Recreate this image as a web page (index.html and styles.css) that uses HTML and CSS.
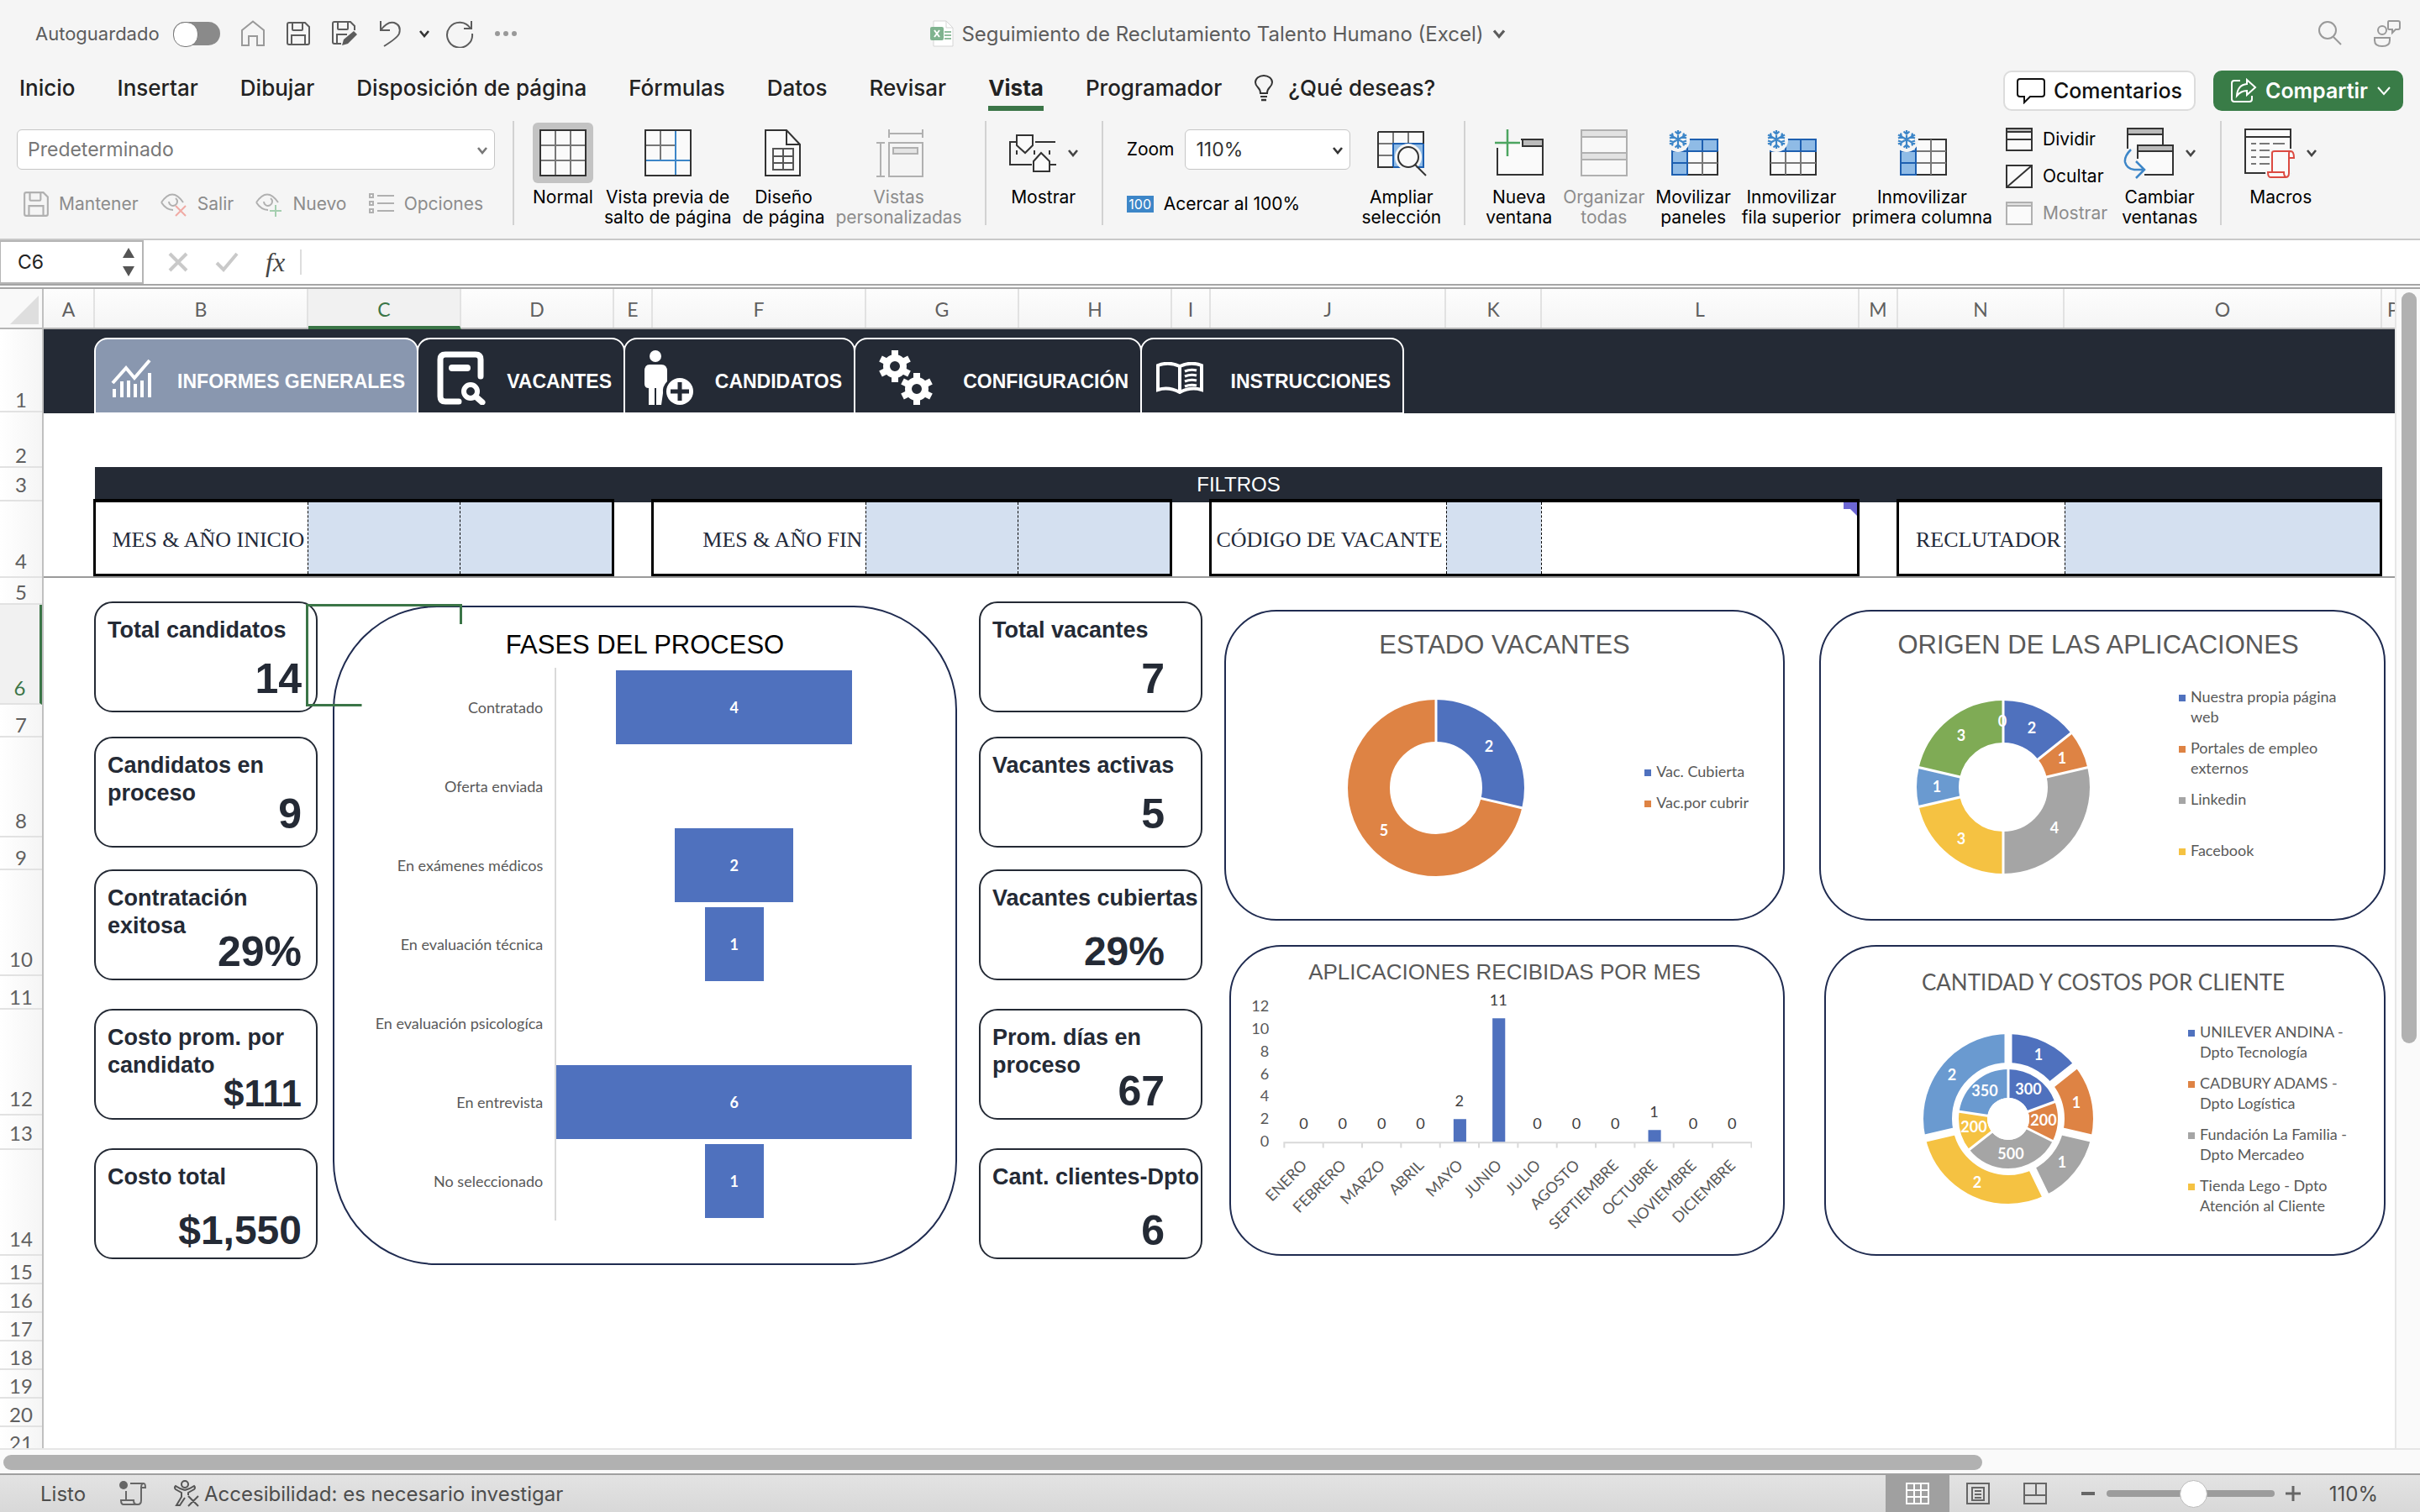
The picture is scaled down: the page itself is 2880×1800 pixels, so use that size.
FILE: index.html
```html
<!DOCTYPE html>
<html lang="es">

<head>
    <meta charset="UTF-8">
    <title>Seguimiento de Reclutamiento Talento Humano (Excel)</title>
    <link rel="stylesheet" href="styles.css">
</head>

<body>
    <svg class="defs" aria-hidden="true">
        <symbol id="chevron" viewBox="0 0 14 10"><path d="M2 2l5 6 5-6" fill="none" stroke="currentColor" stroke-width="2.6"/></symbol>
        <symbol id="snow" viewBox="0 0 24 24"><path d="M12 1v22M2 6.500l20 11M2 17.500l20-11M8.500 2.500l3.500 3 3.500-3M8.500 21.500l3.500-3 3.500 3M2 10.500l4-1.500-1-4.500M22 13.500l-4 1.500 1 4.500M2 13.500l4 1.500-1 4.500M22 10.500l-4-1.500 1-4.500" fill="none" stroke="#3d86c8" stroke-width="2.200"/></symbol>
        <symbol id="floppy" viewBox="0 0 30 30"><path d="M2 4q0-2 2-2h19l5 5v19q0 2-2 2h-22q-2 0-2-2zM8 2v8q0 1 1 1h10q1 0 1-1v-8M7 28v-11h16v11" fill="none" stroke="currentColor" stroke-width="2"/></symbol>
    </svg>

    <header class="titlebar">
        <div class="quick">
            <label for="autosave">Autoguardado</label>
            <input class="switch" type="checkbox" id="autosave">
            <button class="faded" aria-label="Inicio"><svg width="30" height="32" viewBox="0 0 30 32"><path d="M2 12L15 1.500 28 12v18h-8v-11h-10v11h-8z" fill="none" stroke="currentColor" stroke-width="2"/></svg></button>
            <button aria-label="Guardar"><svg width="30" height="30"><use href="#floppy"/></svg></button>
            <button aria-label="Guardar como"><svg width="32" height="32" viewBox="0 0 32 32"><path d="M12 28h-8q-2 0-2-2v-22q0-2 2-2h19l5 5v5M8 2v8q0 1 1 1h10q1 0 1-1v-8M7 28v-11h12" fill="none" stroke="currentColor" stroke-width="2"/><path d="M13 30l2-7 12-10 4 4-11 11z" fill="currentColor"/></svg></button>
            <button aria-label="Deshacer"><svg width="30" height="34" viewBox="0 0 30 34"><path d="M3 2v11h11M3 13q8-11 16-9 9 3 6 13-2 5-18 15" fill="none" stroke="currentColor" stroke-width="2"/></svg></button>
            <button class="more-undo" aria-label="Lista de deshacer"><svg width="14" height="10"><use href="#chevron"/></svg></button>
            <button aria-label="Rehacer"><svg width="34" height="34" viewBox="0 0 34 34"><path d="M31 2v9h-9M30 11a15 15 0 1 0 2 6" fill="none" stroke="currentColor" stroke-width="2"/></svg></button>
            <button class="faded" aria-label="Más"><svg width="28" height="8"><circle cx="4" cy="4" r="3" fill="currentColor"/><circle cx="14" cy="4" r="3" fill="currentColor"/><circle cx="24" cy="4" r="3" fill="currentColor"/></svg></button>
        </div>
        <h1 class="doc">
            <svg width="28" height="32" viewBox="0 0 28 32"><path d="M4 1h15l8 8v22H4z" fill="#fff" stroke="#d5d5d5"/><path d="M19 1v8h8" fill="none" stroke="#d5d5d5"/><path d="M17 14h8M17 18h8M17 22h8" stroke="#8fbd9d" stroke-width="2"/><rect y="8" width="16" height="16" rx="2" fill="#7fb38f"/><path d="M5 12l6 8M11 12l-6 8" stroke="#fff" stroke-width="2"/></svg>
            Seguimiento de Reclutamiento Talento Humano (Excel)
            <svg width="18" height="12"><use href="#chevron"/></svg>
        </h1>
        <div class="title-end">
            <button aria-label="Buscar"><svg width="30" height="32" viewBox="0 0 30 32"><circle cx="12" cy="12" r="10" fill="none" stroke="currentColor" stroke-width="2"/><path d="M19 20l9 9" stroke="currentColor" stroke-width="2"/></svg></button>
            <button aria-label="Colaboradores"><svg width="34" height="34" viewBox="0 0 34 34"><g fill="none" stroke="currentColor" stroke-width="2"><circle cx="11" cy="13" r="5"/><path d="M2 22h18v3q0 7-9 7t-9-7zM19 2h11q2 0 2 2v6q0 2-2 2h-3l-4 4v-4h-4q-1 0-1-2v-6q0-2 1-2z"/></g></svg></button>
        </div>
    </header>

    <nav class="menu">
        <a href="#">Inicio</a>
        <a href="#">Insertar</a>
        <a href="#">Dibujar</a>
        <a href="#">Disposición de página</a>
        <a href="#">Fórmulas</a>
        <a href="#">Datos</a>
        <a href="#">Revisar</a>
        <a href="#" class="active">Vista</a>
        <a href="#">Programador</a>
        <a href="#" class="tell">
            <svg width="24" height="32" viewBox="0 0 24 32"><path d="M8 22q0-4-3-7-3-3-3-6a10 8 0 0 1 20 0q0 3-3 6-3 3-3 7zM8 26h8" fill="none" stroke="#333" stroke-width="2"/><path d="M9 30h6" stroke="#333" stroke-width="2.500"/></svg>
            ¿Qué deseas?
        </a>
        <div class="menu-end">
            <button class="comments"><svg width="34" height="32" viewBox="0 0 34 32"><path d="M4 2h26q3 0 3 3v15q0 3-3 3h-14l-7 7v-7h-5q-3 0-3-3v-15q0-3 3-3z" fill="none" stroke="#111" stroke-width="2"/></svg>Comentarios</button>
            <button class="share"><svg width="32" height="30" viewBox="0 0 32 30"><g fill="none" stroke="#fff" stroke-width="2"><path d="M12 3h-7q-3 0-3 3v19q0 3 3 3h18q3 0 3-3v-4"/><path d="M20 2l10 9-10 9v-5q-7 0-12 6 1-13 12-14z"/></g></svg>Compartir<svg width="18" height="12" viewBox="0 0 18 12"><path d="M2 2l7 8 7-8" fill="none" stroke="#fff" stroke-width="2"/></svg></button>
        </div>
    </nav>

    <section class="ribbon">
        <div class="views">
            <div class="picker wide">
                <select aria-label="Vista de hoja"><option>Predeterminado</option></select>
                <svg width="14" height="10"><use href="#chevron"/></svg>
            </div>
            <div class="view-actions">
                <button disabled><svg width="32" height="32"><use href="#floppy"/></svg>Mantener</button>
                <button disabled><svg width="34" height="32" viewBox="0 0 34 32"><path d="M2 14q13-19 26 0M2 14q6 9 14 9M11 13a5 5 0 1 0 8-4" fill="none" stroke="currentColor" stroke-width="2"/><path d="M19 18l12 12M31 18l-12 12" stroke="#f0aaa4" stroke-width="2"/></svg>Salir</button>
                <button disabled><svg width="34" height="32" viewBox="0 0 34 32"><path d="M2 14q13-19 26 0M2 14q6 9 14 9M11 13a5 5 0 1 0 8-4" fill="none" stroke="currentColor" stroke-width="2"/><path d="M25 17v14M18 24h14" stroke="#a5cfb0" stroke-width="2"/></svg>Nuevo</button>
                <button disabled><svg width="32" height="28" viewBox="0 0 32 28"><path d="M2 2h4v4h-4zM2 11h4v4h-4zM2 20h4v4h-4zM11 4h20M11 13h20M11 22h20" fill="none" stroke="currentColor" stroke-width="2"/></svg>Opciones</button>
            </div>
        </div>

        <div class="group first">
            <button class="tool on"><span class="pic"><svg width="58" height="58" viewBox="0 0 58 58"><path d="M2 2h54v54h-54z" fill="#fafafa"/><path d="M20 2v54M38 2v54M2 20h54M2 38h54" stroke="#777" stroke-width="2"/><path d="M2 2h54v54h-54z" fill="none" stroke="#333" stroke-width="2"/></svg></span>Normal</button>
            <button class="tool"><span class="pic"><svg width="58" height="58" viewBox="0 0 58 58"><path d="M2 2h54v54h-54z" fill="#fafafa"/><path d="M20 2v36M2 20h36" stroke="#777" stroke-width="2"/><path d="M2 2h54v54h-54z" fill="none" stroke="#333" stroke-width="2"/><path d="M38 3v52M3 38h52" stroke="#3d86c8" stroke-width="2"/></svg></span>Vista previa de<br>salto de página</button>
            <button class="tool"><span class="pic"><svg width="46" height="58" viewBox="0 0 46 58"><path d="M2 2h25l16 17v37h-41z" fill="#fafafa" stroke="#333" stroke-width="2"/><path d="M27 2v17h16" fill="none" stroke="#333" stroke-width="2"/><path d="M11 24h24v25h-24zM23 24v25M11 33h24M11 41h24" fill="none" stroke="#555" stroke-width="2"/></svg></span>Diseño<br>de página</button>
            <button class="tool" disabled><span class="pic"><svg width="58" height="58" viewBox="0 0 58 58"><g fill="none" stroke="#b0b0b0" stroke-width="2"><path d="M17 1v10M57 1v10M17 6h40M2 17h10M2 57h10M7 17v40M17 17h40v40h-40z"/><path d="M22 23h29v7h-29z" fill="#e4e4e4"/></g></svg></span>Vistas<br>personalizadas</button>
        </div>

        <div class="group single">
            <button class="tool"><span class="pic"><svg width="58" height="46" viewBox="0 0 58 46"><path d="M10 10h-8v27h26M32 10h24M50 37h7M10 20v5M31 20v5M49 20v5" fill="none" stroke="#333" stroke-width="2"/><path d="M10 2h19v12l-9 9-10-9zM30 45v-12l9-10 10 10v12z" fill="#fafafa" stroke="#333" stroke-width="2"/></svg><svg class="drop" width="14" height="10"><use href="#chevron"/></svg></span>Mostrar</button>
        </div>

        <div class="group">
            <div class="zoom-box">
                <div class="zoom-row">
                    <label for="zoom">Zoom</label>
                    <div class="picker">
                        <select id="zoom"><option>110%</option></select>
                        <svg width="14" height="10"><use href="#chevron"/></svg>
                    </div>
                </div>
                <button class="hundred"><span>100</span>Acercar al 100%</button>
            </div>
            <button class="tool"><span class="pic"><svg width="60" height="58" viewBox="0 0 60 58"><path d="M2 4h54v42h-54z" fill="#fafafa"/><path d="M20 4v42M38 4v14M2 18h54M2 32h18" stroke="#777" stroke-width="2"/><path d="M20 18h36v28h-36z" fill="#8fbbe6" stroke="#1d5fb0" stroke-width="2"/><path d="M2 4h54v14M2 4v42h18" fill="none" stroke="#333" stroke-width="2"/><circle cx="38" cy="34" r="16" fill="#f5f5f5"/><circle cx="38" cy="34" r="12" fill="#fafafa" stroke="#333" stroke-width="2"/><path d="M46 43l13 13" stroke="#333" stroke-width="2"/></svg></span>Ampliar<br>selección</button>
        </div>

        <div class="group">
            <button class="tool"><span class="pic"><svg width="60" height="60" viewBox="0 0 60 60"><path d="M4 24v32h54v-42h-26" fill="#fafafa" stroke="#333" stroke-width="2"/><path d="M34 14h24v8h-24z" fill="#bbb" stroke="#333" stroke-width="2"/><path d="M16 2v32M1 18h30" stroke="#4ca560" stroke-width="2.500"/></svg></span>Nueva<br>ventana</button>
            <button class="tool" disabled><span class="pic"><svg width="58" height="58" viewBox="0 0 58 58"><path d="M2 2h54v54h-54z" fill="#f8f8f8" stroke="#b0b0b0" stroke-width="2"/><path d="M2 2h54v8h-54zM2 29h54v8h-54z" fill="#e2e2e2" stroke="#b0b0b0" stroke-width="2"/></svg></span>Organizar<br>todas</button>
            <button class="tool"><span class="pic"><svg width="62" height="60" viewBox="0 0 62 60"><path d="M6 14h54v42h-54z" fill="#fafafa" stroke="#333" stroke-width="2"/><path d="M42 28v28M24 42h36" stroke="#777" stroke-width="2"/><path d="M6 14h54v14h-36v28h-18z" fill="#8fbbe6"/><path d="M42 14v14M24 14v42M6 28h54M6 42h18M6 14v42h18M60 14v14M24 14h36" fill="none" stroke="#1d5fb0" stroke-width="2"/><circle cx="13" cy="15" r="14" fill="#f5f5f5"/><use href="#snow" x="1" y="2" width="24" height="24"/></svg></span>Movilizar<br>paneles</button>
            <button class="tool"><span class="pic"><svg width="62" height="60" viewBox="0 0 62 60"><path d="M6 14h54v42h-54z" fill="#fafafa" stroke="#333" stroke-width="2"/><path d="M24 28v28M42 28v28M6 42h54" stroke="#777" stroke-width="2"/><path d="M6 14h54v14h-54zM24 14v14M42 14v14" fill="#8fbbe6" stroke="#1d5fb0" stroke-width="2"/><circle cx="13" cy="15" r="14" fill="#f5f5f5"/><use href="#snow" x="1" y="2" width="24" height="24"/></svg></span>Inmovilizar<br>fila superior</button>
            <button class="tool"><span class="pic"><svg width="62" height="60" viewBox="0 0 62 60"><path d="M6 14h54v42h-54z" fill="#fafafa" stroke="#333" stroke-width="2"/><path d="M42 14v42M24 28h36M24 42h36" stroke="#777" stroke-width="2"/><path d="M6 14h18v42h-18zM6 28h18M6 42h18" fill="#8fbbe6" stroke="#1d5fb0" stroke-width="2"/><circle cx="13" cy="15" r="14" fill="#f5f5f5"/><use href="#snow" x="1" y="2" width="24" height="24"/></svg></span>Inmovilizar<br>primera columna</button>
            <div class="stack">
                <button><svg width="34" height="30" viewBox="0 0 34 30"><path d="M2 2h30v26h-30zM2 15h30" fill="#fafafa" stroke="#333" stroke-width="2"/><path d="M2 2h30v4h-30z" fill="#bbb" stroke="#333" stroke-width="2"/></svg>Dividir</button>
                <button><svg width="34" height="30" viewBox="0 0 34 30"><path d="M2 2h30v26h-30zM2 28L32 2" fill="#fafafa" stroke="#333" stroke-width="2"/></svg>Ocultar</button>
                <button disabled><svg width="34" height="30" viewBox="0 0 34 30"><path d="M2 2h30v26h-30z" fill="#fafafa" stroke="#b0b0b0" stroke-width="2"/><path d="M2 2h30v4h-30z" fill="#e2e2e2" stroke="#b0b0b0" stroke-width="2"/></svg>Mostrar</button>
            </div>
            <button class="tool"><span class="pic"><svg width="62" height="62" viewBox="0 0 62 62"><path d="M6 26v-24h42v20" fill="#fafafa" stroke="#333" stroke-width="2"/><path d="M6 2h42v7h-42z" fill="#bbb" stroke="#333" stroke-width="2"/><path d="M18 38v-16h42v35h-34" fill="#fafafa" stroke="#333" stroke-width="2"/><path d="M18 22h42v7h-42z" fill="#bbb" stroke="#333" stroke-width="2"/><path d="M10 27q-8 8-7 15 2 8 11 9h12M16 41l10 10-10 10" fill="none" stroke="#3d86c8" stroke-width="2.500"/></svg><svg class="drop" width="14" height="10"><use href="#chevron"/></svg></span>Cambiar<br>ventanas</button>
        </div>

        <div class="group single">
            <button class="tool"><span class="pic"><svg width="62" height="60" viewBox="0 0 62 60"><path d="M2 2h54v52h-54zM2 11h54" fill="#fafafa" stroke="#333" stroke-width="2"/><path d="M9 19h6M19 19h12M35 19h14M9 27h6M19 27h12M9 35h6M19 35h12M9 43h6M19 43h12" stroke="#777" stroke-width="2"/><path d="M34 28h22q4 0 4 8h-6v18q0 5-4 5h-17q-4 0-4-6h6z" fill="#fafafa" stroke="#f5f5f5" stroke-width="6"/><path d="M34 52v-22q0-2 3-2h19q4 0 4 8h-6v18q0 5-4 5h-18q-3 0-3-6h19q0 5 3 6M54 36v-5q0-3 2-3" fill="#fafafa" stroke="#dc4a41" stroke-width="2"/></svg><svg class="drop" width="14" height="10"><use href="#chevron"/></svg></span>Macros</button>
        </div>
    </section>

    <div class="formula-bar">
        <div class="name-box">
            <input type="text" value="C6" aria-label="Cuadro de nombres">
            <svg width="16" height="34" viewBox="0 0 16 34"><path d="M1 12L8 0l7 12zM1 22h14l-7 12z" fill="#555"/></svg>
        </div>
        <button aria-label="Cancelar"><svg width="24" height="24" viewBox="0 0 24 24"><path d="M2 2l20 20M22 2L2 22" stroke="#c9c9c9" stroke-width="4"/></svg></button>
        <button aria-label="Introducir"><svg width="28" height="24" viewBox="0 0 28 24"><path d="M2 13l8 8L26 2" fill="none" stroke="#c9c9c9" stroke-width="4"/></svg></button>
        <button class="fx" aria-label="Insertar función">fx</button>
        <input class="formula" type="text" aria-label="Barra de fórmulas">
    </div>

    <main class="workbook">
        <div class="corner"><svg width="34" height="34" viewBox="0 0 34 34"><path d="M34 0v34H0z" fill="#dedede"/></svg></div>
        <div class="col-heads cols">
            <span>A</span><span>B</span><span class="current">C</span><span>D</span><span>E</span><span>F</span><span>G</span><span>H</span><span>I</span><span>J</span><span>K</span><span>L</span><span>M</span><span>N</span><span>O</span><span>P</span>
        </div>
        <div class="row-heads">
            <span>1</span><span>2</span><span class="tall">3</span><span class="tall">4</span><span>5</span><span class="tall current">6</span><span>7</span><span class="tall">8</span><span>9</span><span class="tall">10</span><span>11</span><span class="tall">12</span><span class="tall">13</span><span class="tall">14</span><span>15</span><span>16</span><span>17</span><span>18</span><span>19</span><span>20</span><span>21</span>
        </div>

        <div class="sheet">
            <nav class="tabs">
                <a href="#" class="checked tab-informes"><svg width="50" height="48" viewBox="0 0 50 48"><path d="M2 30L18 12l10 12L46 3" fill="none" stroke="#fff" stroke-width="4"/><path d="M4 47V37M13 47V28M21 47V27M29 47V31M37 47V27M46 47V18" stroke="#fff" stroke-width="4"/></svg><span>INFORMES GENERALES</span></a>
                <a href="#" class="tab-vacantes"><svg width="58" height="64" viewBox="0 0 58 64"><path d="M26 60H10q-6 0-6-6V10q0-6 6-6h36q6 0 6 6v20" fill="none" stroke="#fff" stroke-width="7" stroke-linecap="round"/><path d="M18 20h18" stroke="#fff" stroke-width="8" stroke-linecap="round"/><circle cx="40" cy="48" r="8" fill="none" stroke="#fff" stroke-width="6"/><path d="M46 54l8 7" stroke="#fff" stroke-width="7" stroke-linecap="round"/></svg><span>VACANTES</span></a>
                <a href="#" class="tab-candidatos"><svg width="60" height="66" viewBox="0 0 60 66"><circle cx="14" cy="7" r="7" fill="#fff"/><path d="M7 17h14q7 0 7 8v12q-6 6-5 14l-2 14h-6v-20h-2v20h-7V45q-5 0-5-5V25q0-8 6-8z" fill="#fff"/><circle cx="43" cy="49" r="16" fill="#fff"/><path d="M43 38v22M32 49h22" stroke="#242a35" stroke-width="5"/></svg><span>CANDIDATOS</span></a>
                <a href="#" class="tab-config"><svg width="64" height="66" viewBox="0 0 64 66"><g id="gear" fill="none" stroke="#fff"><circle cx="19" cy="19" r="10" stroke-width="8"/><path d="M19 0v8M19 30v8M2 10l8 4M28 24l8 4M2 28l8-4M28 14l8-4" stroke-width="8"/></g><use href="#gear" x="26" y="27"/></svg><span>CONFIGURACIÓN</span></a>
                <a href="#" class="tab-instrucciones"><svg width="58" height="38" viewBox="0 0 58 38"><path d="M29 5Q16-1 3 4v29q13-4 26 3 13-7 26-3V4Q42-1 29 5zM29 5v30" fill="none" stroke="#fff" stroke-width="4"/><path d="M35 11q7-3 14-1M35 17q7-3 14-1M35 23q7-3 14-1M35 29q7-3 14-1" fill="none" stroke="#fff" stroke-width="3"/></svg><span>INSTRUCCIONES</span></a>
            </nav>

            <form class="filters cols">
                <h2>FILTROS</h2>
                <div class="filter f-inicio"><label for="mes-inicio">MES &amp; AÑO INICIO</label><input id="mes-inicio" type="text"><input type="text" aria-label="Año inicio"></div>
                <div class="filter f-fin"><label for="mes-fin">MES &amp; AÑO FIN</label><input id="mes-fin" type="text"><input type="text" aria-label="Año fin"></div>
                <div class="filter f-codigo"><label for="codigo">CÓDIGO DE VACANTE</label><input id="codigo" type="text"><output for="codigo"></output></div>
                <div class="filter f-reclutador"><label for="reclutador">RECLUTADOR</label><input id="reclutador" type="text"></div>
            </form>

            <div class="board">
                <div class="kpis candidatos">
                    <article class="kpi"><h3>Total candidatos</h3><strong>14</strong></article>
                    <article class="kpi"><h3>Candidatos en proceso</h3><strong>9</strong></article>
                    <article class="kpi low"><h3>Contratación exitosa</h3><strong>29%</strong></article>
                    <article class="kpi low small"><h3>Costo prom. por candidato</h3><strong>$111</strong></article>
                    <article class="kpi low medium"><h3>Costo total</h3><strong>$1,550</strong></article>
                </div>

                <section class="chart funnel">
                    <h2>FASES DEL PROCESO</h2>
                    <dl>
                        <dt>Contratado</dt><dd><span style="width:66.600%">4</span></dd>
                        <dt>Oferta enviada</dt><dd></dd>
                        <dt>En exámenes médicos</dt><dd><span style="width:33.300%">2</span></dd>
                        <dt>En evaluación técnica</dt><dd><span style="width:16.600%">1</span></dd>
                        <dt>En evaluación psicologíca</dt><dd></dd>
                        <dt>En entrevista</dt><dd><span style="width:100%">6</span></dd>
                        <dt>No seleccionado</dt><dd><span style="width:16.600%">1</span></dd>
                    </dl>
                </section>

                <div class="kpis vacantes">
                    <article class="kpi"><h3>Total vacantes</h3><strong>7</strong></article>
                    <article class="kpi"><h3>Vacantes activas</h3><strong>5</strong></article>
                    <article class="kpi low medium"><h3>Vacantes cubiertas</h3><strong>29%</strong></article>
                    <article class="kpi low"><h3>Prom. días en proceso</h3><strong>67</strong></article>
                    <article class="kpi low"><h3>Cant. clientes-Dpto</h3><strong>6</strong></article>
                </div>

                <div class="charts left">
                    <section class="chart estado">
                        <h2>ESTADO VACANTES</h2>
                        <div class="chart-body">
                            <svg class="donut" width="210" height="210" viewBox="-105 -105 210 210">
                                <g transform="rotate(-90)" fill="none" stroke-width="50">
                                    <circle r="80" pathLength="7" stroke="#de8344" stroke-dasharray="5 9" stroke-dashoffset="-2"/>
                                    <circle r="80" pathLength="7" stroke="#4f71be" stroke-dasharray="2 9"/>
                                </g>
                                <path d="M0 0V-106M0 0L103 24" stroke="#fff" stroke-width="3"/>
                                <text x="63" y="-43">2</text><text x="-62" y="57">5</text>
                            </svg>
                            <ul class="legend">
                                <li class="c1">Vac. Cubierta</li>
                                <li class="c2">Vac.por cubrir</li>
                            </ul>
                        </div>
                    </section>
                    <section class="chart meses">
                        <h2>APLICACIONES RECIBIDAS POR MES</h2>
                        <svg class="bars" viewBox="0 0 600 290">
                            <g class="axis">
                                <text x="29" y="26">12</text><text x="29" y="53">10</text><text x="29" y="79">8</text><text x="29" y="106">6</text><text x="29" y="132">4</text><text x="29" y="159">2</text><text x="29" y="186">0</text>
                            </g>
                            <path d="M46 181h554M47 181v6M93 181v6M139 181v6M185 181v6M231 181v6M277 181v6M323 181v6M369 181v6M415 181v6M461 181v6M507 181v6M553 181v6M599 181v6" fill="none" stroke="#d9d9d9" stroke-width="2"/>
                            <path d="M247 153h15v27h-15zM293 34h15v146h-15zM477 166h15v14h-15z" fill="#4f71be"/>
                            <g class="values">
                                <text x="70" y="165">0</text><text x="116" y="165">0</text><text x="162" y="165">0</text><text x="208" y="165">0</text><text x="254" y="138">2</text><text x="300" y="19">11</text><text x="346" y="165">0</text><text x="392" y="165">0</text><text x="438" y="165">0</text><text x="484" y="151">1</text><text x="530" y="165">0</text><text x="576" y="165">0</text>
                            </g>
                            <g class="months">
                                <text transform="translate(75 209) rotate(-45)">ENERO</text>
                                <text transform="translate(121 209) rotate(-45)">FEBRERO</text>
                                <text transform="translate(167 209) rotate(-45)">MARZO</text>
                                <text transform="translate(213 209) rotate(-45)">ABRIL</text>
                                <text transform="translate(259 209) rotate(-45)">MAYO</text>
                                <text transform="translate(305 209) rotate(-45)">JUNIO</text>
                                <text transform="translate(351 209) rotate(-45)">JULIO</text>
                                <text transform="translate(397 209) rotate(-45)">AGOSTO</text>
                                <text transform="translate(443 209) rotate(-45)">SEPTIEMBRE</text>
                                <text transform="translate(489 209) rotate(-45)">OCTUBRE</text>
                                <text transform="translate(535 209) rotate(-45)">NOVIEMBRE</text>
                                <text transform="translate(581 209) rotate(-45)">DICIEMBRE</text>
                            </g>
                        </svg>
                    </section>
                </div>

                <div class="charts right">
                    <section class="chart origen">
                        <h2>ORIGEN DE LAS APLICACIONES</h2>
                        <div class="chart-body">
                            <svg class="donut" width="210" height="210" viewBox="-105 -105 210 210">
                                <g transform="rotate(-90)" fill="none" stroke-width="50">
                                    <circle r="78" pathLength="14" stroke="#4f71be" stroke-dasharray="2 20"/>
                                    <circle r="78" pathLength="14" stroke="#de8344" stroke-dasharray="1 20" stroke-dashoffset="-2"/>
                                    <circle r="78" pathLength="14" stroke="#a5a5a5" stroke-dasharray="4 20" stroke-dashoffset="-3"/>
                                    <circle r="78" pathLength="14" stroke="#f5c242" stroke-dasharray="3 20" stroke-dashoffset="-7"/>
                                    <circle r="78" pathLength="14" stroke="#6a9ad0" stroke-dasharray="1 20" stroke-dashoffset="-10"/>
                                    <circle r="78" pathLength="14" stroke="#7fab55" stroke-dasharray="3 20" stroke-dashoffset="-11"/>
                                </g>
                                <path d="M0-106V106M0 0L83-66M0 0L103-24M0 0L-103 24M0 0L-103-24" stroke="#fff" stroke-width="3"/>
                                <text x="34" y="-64">2</text><text x="70" y="-28">1</text><text x="61" y="55">4</text><text x="-50" y="68">3</text><text x="-79" y="6">1</text><text x="-50" y="-55">3</text><text x="-1" y="-72">0</text>
                            </svg>
                            <ul class="legend">
                                <li class="c1">Nuestra propia página web</li>
                                <li class="c2">Portales de empleo externos</li>
                                <li class="c3">Linkedin</li>
                                <li class="c4">Facebook</li>
                            </ul>
                        </div>
                    </section>
                    <section class="chart clientes">
                        <h2>CANTIDAD Y COSTOS POR CLIENTE</h2>
                        <div class="chart-body">
                            <svg class="donut" width="210" height="210" viewBox="-105 -105 210 210">
                                <g transform="rotate(-90)" fill="none" stroke-width="34">
                                    <circle r="84" pathLength="7" stroke="#4f71be" stroke-dasharray="1 9"/>
                                    <circle r="84" pathLength="7" stroke="#de8344" stroke-dasharray="1 9" stroke-dashoffset="-1"/>
                                    <circle r="84" pathLength="7" stroke="#a5a5a5" stroke-dasharray="1 9" stroke-dashoffset="-2"/>
                                    <circle r="84" pathLength="7" stroke="#f5c242" stroke-dasharray="2 9" stroke-dashoffset="-3"/>
                                    <circle r="84" pathLength="7" stroke="#6a9ad0" stroke-dasharray="2 9" stroke-dashoffset="-5"/>
                                </g>
                                <path d="M0 0V-106M0 0L83-66M0 0L103 24M0 0L46 95M0 0L-103 24" stroke="#fff" stroke-width="9"/>
                                <g transform="rotate(-90)" fill="none" stroke-width="34">
                                    <circle r="42" pathLength="155" stroke="#4f71be" stroke-dasharray="30 200"/>
                                    <circle r="42" pathLength="155" stroke="#de8344" stroke-dasharray="20 200" stroke-dashoffset="-30"/>
                                    <circle r="42" pathLength="155" stroke="#a5a5a5" stroke-dasharray="50 200" stroke-dashoffset="-50"/>
                                    <circle r="42" pathLength="155" stroke="#f5c242" stroke-dasharray="20 200" stroke-dashoffset="-100"/>
                                    <circle r="42" pathLength="155" stroke="#6a9ad0" stroke-dasharray="35 200" stroke-dashoffset="-120"/>
                                </g>
                                <path d="M0 0V-61M0 0L57-21M0 0L54 27M0 0L-47 37M0 0L-60-9" stroke="#fff" stroke-width="3"/>
                                <circle r="25" fill="#fff"/>
                                <text x="36" y="-70">1</text><text x="81" y="-13">1</text><text x="64" y="58">1</text><text x="-37" y="82">2</text><text x="-67" y="-46">2</text>
                                <text x="24" y="-29">300</text><text x="42" y="8">200</text><text x="3" y="48">500</text><text x="-41" y="16">200</text><text x="-28" y="-27">350</text>
                            </svg>
                            <ul class="legend">
                                <li class="c1">UNILEVER ANDINA - Dpto Tecnología</li>
                                <li class="c2">CADBURY ADAMS - Dpto Logística</li>
                                <li class="c3">Fundación La Familia - Dpto Mercadeo</li>
                                <li class="c4">Tienda Lego - Dpto Atención al Cliente</li>
                            </ul>
                        </div>
                    </section>
                </div>

                <!-- marco de la celda C6, asoma por encima de las tarjetas -->
                <svg class="selection" width="186" height="122" viewBox="0 0 186 122"><path d="M184.500 24V1.500H1.500v119h65" fill="none" stroke="#3b7547" stroke-width="3"/></svg>
            </div>
        </div>

        <div class="scroll-y"><span></span></div>
        <div class="scroll-x"><span></span></div>
    </main>

    <footer class="status">
        <span class="ready">Listo</span>
        <button aria-label="Grabar macro"><svg width="32" height="30" viewBox="0 0 32 30"><circle cx="5" cy="5" r="5" fill="#666"/><path d="M13 3h16q2 0 2 5h-5v15q0 5-4 5h-17q-3 0-3-5h15q0 5 4 5M8 12v10M26 8q0-5 3-5" fill="none" stroke="#666" stroke-width="2"/></svg></button>
        <button class="access"><svg width="32" height="32" viewBox="0 0 32 32"><g fill="none" stroke="#555" stroke-width="2"><circle cx="14" cy="5" r="4"/><path d="M14 12Q7 10 3 7q-2 2 0 4l7 4v5L4 30h4l6-9M14 12q7-2 11-5 2 2 0 4l-7 4v3M18 19l12 12M30 19L18 31"/></g></svg>Accesibilidad: es necesario investigar</button>
        <div class="status-end">
            <button class="view on" aria-label="Normal"><svg width="28" height="26" viewBox="0 0 28 26"><path d="M1 1h26v24h-26zM10 1v24M18 1v24M1 9h26M1 17h26" fill="none" stroke="#fff" stroke-width="2"/></svg></button>
            <button class="view" aria-label="Diseño de página"><svg width="28" height="26" viewBox="0 0 28 26"><path d="M1 1h26v24h-26zM7 6h14v15h-14zM10 10h8M10 14h8M10 18h8" fill="none" stroke="#666" stroke-width="2"/></svg></button>
            <button class="view" aria-label="Salto de página"><svg width="28" height="26" viewBox="0 0 28 26"><path d="M1 1h26v24h-26zM15 1v14M1 15h26" fill="none" stroke="#666" stroke-width="2"/></svg></button>
            <button class="minus" aria-label="Reducir"><svg width="18" height="18" viewBox="0 0 18 18"><path d="M1 9h16" stroke="#666" stroke-width="4"/></svg></button>
            <input type="range" min="0" max="100" value="52" aria-label="Zoom">
            <button aria-label="Ampliar"><svg width="18" height="18" viewBox="0 0 18 18"><path d="M0 9h18M9 0v18" stroke="#666" stroke-width="3"/></svg></button>
            <span class="percent">110%</span>
        </div>
    </footer>
</body>

</html>
```
FILE: styles.css
```css
* {
    box-sizing: border-box;
    padding: 0;
    margin: 0;
}

body {
    display: flex;
    flex-direction: column;
    height: 100vh;
    overflow: hidden;
    background: #f5f5f5;
    color: #222;
    font-family: Inter, "Liberation Sans", sans-serif;
    font-size: 21px;
}

button,
input,
select {
    border: 0;
    background: none;
    color: inherit;
    font: inherit;
}

a {
    color: inherit;
    text-decoration: none;
}

ul {
    list-style: none;
}

svg {
    display: block;
    flex: none;
}

.defs {
    position: absolute;
    width: 0;
    height: 0;
}

/* barra de título */
.titlebar {
    flex: none;
    display: grid;
    grid-template-columns: 1fr auto 1fr;
    align-items: center;
    height: 80px;
    padding: 0 22px 0 42px;
    color: #5c5c5c;
}

.quick {
    display: flex;
    align-items: center;
    gap: 24px;
}

.quick label {
    font-size: 22px;
    margin-right: -8px;
}

.quick .faded {
    color: #999;
}

.quick .more-undo {
    margin: 0 -6px;
    color: #333;
}

.switch {
    appearance: none;
    width: 56px;
    height: 28px;
    border-radius: 14px;
    background: #8a8a8a;
}

.switch::before {
    content: '';
    display: block;
    width: 28px;
    height: 28px;
    border: 1px solid #777;
    border-radius: 14px;
    background: #fff;
}

.doc {
    display: flex;
    align-items: center;
    gap: 9px;
    font-size: 24px;
    font-weight: 400;
}

.title-end {
    display: flex;
    align-items: center;
    justify-content: flex-end;
    gap: 36px;
    color: #999;
}

/* menú */
.menu {
    flex: none;
    display: flex;
    gap: 50px;
    height: 52px;
    padding: 0 20px 0 23px;
    font-size: 26px;
    font-weight: 500;
    line-height: 50px;
}

.menu .active {
    font-weight: 700;
    border-bottom: 6px solid #3b7547;
}

.menu .tell {
    display: flex;
    align-items: center;
    gap: 17px;
    height: 50px;
    margin-left: -12px;
}

.menu-end {
    display: flex;
    gap: 21px;
    margin-left: auto;
    padding-top: 4px;
}

.menu-end button {
    display: flex;
    align-items: center;
    gap: 10px;
    height: 48px;
    padding: 0 14px;
    border-radius: 10px;
    font-size: 25px;
}

.comments {
    background: #fff;
    border: 2px solid #dcdcdc;
    color: #111;
}

.menu-end .share {
    padding: 0 14px 0 20px;
    background: #397c47;
    color: #fff;
    font-weight: 600;
}

/* cinta de opciones */
.ribbon {
    flex: none;
    display: flex;
    height: 154px;
    padding: 12px 20px 0;
    border-bottom: 2px solid #c8c8c8;
    line-height: 24px;
}

.views {
    width: 569px;
    padding-top: 10px;
}

.picker {
    position: relative;
    width: 197px;
    color: #333;
}

.picker.wide {
    width: auto;
    color: #777;
}

.picker select {
    appearance: none;
    width: 100%;
    height: 48px;
    padding: 0 12px;
    border: 1px solid #c6c6c6;
    border-radius: 6px;
    background: #fff;
    font-size: 23px;
}

.picker svg {
    position: absolute;
    right: 8px;
    top: 20px;
}

.view-actions {
    display: flex;
    justify-content: space-between;
    padding: 25px 14px 0 7px;
    color: #8c8c8c;
}

.view-actions button {
    display: flex;
    align-items: center;
    gap: 11px;
}

.view-actions svg {
    color: #b0b0b0;
}

.group {
    display: flex;
    align-items: flex-start;
    gap: 13px;
    height: 124px;
    margin-left: 27px;
    padding-left: 24px;
    border-left: 2px solid #d2d2d2;
}

.group.first {
    margin-left: 21px;
    padding-left: 22px;
}

.group.single {
    padding-left: 26px;
}

.tool {
    display: flex;
    flex-direction: column;
    align-items: center;
    padding-top: 2px;
    line-height: 24px;
    color: #000;
    white-space: nowrap;
}

.tool:disabled,
.stack button:disabled {
    color: #8c8c8c;
}

.pic {
    display: flex;
    align-items: center;
    justify-content: center;
    gap: 12px;
    min-width: 72px;
    height: 72px;
    margin-bottom: 5px;
    border-radius: 6px;
}

.on .pic {
    background: #c3c3c3;
}

.drop {
    color: #444;
}

.zoom-box {
    padding: 10px 0 0 4px;
    color: #000;
}

.zoom-row {
    display: flex;
    align-items: center;
    gap: 13px;
}

.hundred {
    display: flex;
    align-items: center;
    gap: 12px;
    margin-top: 29px;
}

.hundred span {
    width: 32px;
    background: #3d86c8;
    color: #fff;
    font-size: 16px;
    line-height: 20px;
}

.stack {
    display: flex;
    flex-direction: column;
    gap: 14px;
    padding: 7px 4px 0 2px;
}

.stack button {
    display: flex;
    align-items: center;
    gap: 11px;
    height: 30px;
    color: #000;
}

/* barra de fórmulas */
.formula-bar {
    flex: none;
    display: flex;
    align-items: center;
    gap: 32px;
    height: 58px;
    border-bottom: 6px double #a5a5a5;
    background: #fff;
}

.name-box {
    display: flex;
    align-items: center;
    width: 171px;
    height: 52px;
    margin-right: -3px;
    padding: 0 10px 0 20px;
    border: 2px solid #b5b5b5;
    border-left-width: 1px;
}

.name-box input {
    width: 124px;
    font-size: 23px;
}

.formula-bar > button {
    flex: none;
}

.fx {
    color: #444;
    font: italic 32px/50px "Liberation Serif", serif;
}

.formula {
    flex: 1;
    height: 30px;
    margin-left: -14px;
    border-left: 2px solid #ddd;
}

/* hoja */
.workbook {
    flex: 1;
    min-height: 0;
    display: grid;
    grid-template-columns: 52px 1fr 30px;
    grid-template-rows: 48px 1fr 30px;
    background: #fff;
}

.cols {
    display: grid;
    grid-template-columns: 61fr 254fr 182fr 182fr 46fr 254fr 182fr 182fr 46fr 280fr 114fr 378fr 46fr 198fr 378fr 15fr;
}

.corner {
    padding: 8px 6px 0 12px;
    border-right: 2px solid #c0c0c0;
    border-bottom: 2px solid #b5b5b5;
    background: #f9f9f9;
}

.col-heads {
    background: linear-gradient(#fdfdfd, #f5f5f5);
    border-bottom: 2px solid #b5b5b5;
    color: #606060;
    font: 23px/48px Lato, sans-serif;
    text-align: center;
}

.col-heads span {
    min-width: 0;
    overflow: hidden;
    border-right: 2px solid #e2e2e2;
}

.col-heads span:last-child {
    padding-left: 6px;
    border-right: 0;
}

.col-heads .current {
    margin-bottom: -2px;
    border-bottom: 4px solid #3b7547;
    background: #f1f1f1;
    color: #3b7547;
}

.row-heads {
    display: grid;
    grid-template-rows: 99px 66px 40px 91px 32px 119px 39px 119px 39px 126px 40px 126px 41px 126px;
    grid-auto-rows: 34px;
    min-height: 0;
    overflow: hidden;
    background: linear-gradient(90deg, #fff, #f5f5f5);
    border-right: 2px solid #c0c0c0;
    color: #606060;
    font: 24px/26px Lato, sans-serif;
    text-align: center;
}

.row-heads span {
    display: flex;
    align-items: flex-end;
    justify-content: center;
    border-bottom: 2px solid #e2e2e2;
}

.row-heads .tall {
    padding-bottom: 5px;
}

.row-heads .current {
    border-right: 3px solid #3b7547;
    background: #f1f1f1;
    color: #3b7547;
}

.sheet {
    min-width: 0;
    min-height: 0;
    overflow: hidden;
}

.tabs {
    display: flex;
    height: 100px;
    padding: 10px 0 0 60px;
    background: #242a35;
}

.tabs a {
    display: flex;
    align-items: center;
    justify-content: space-between;
    padding: 10px 14px 6px 22px;
    border: 2px solid #fff;
    border-bottom-width: 1px;
    border-radius: 16px 16px 0 0;
    color: #fff;
    font: bold 23px/32px "Liberation Sans", sans-serif;
}

.tabs a + a {
    margin-left: -2px;
}

.tabs span {
    padding-top: 8px;
}

.tabs .checked {
    padding-left: 18px;
    background: #8997af;
}

.tab-informes {
    width: 386px;
}

.tab-vacantes {
    width: 248px;
}

.tab-candidatos {
    width: 276px;
}

.tab-config {
    width: 343px;
}

.tabs .tab-config {
    padding-left: 28px;
}

.tab-instrucciones {
    width: 314px;
}

.tabs .tab-instrucciones {
    padding-left: 16px;
}

.filters {
    grid-template-rows: 38px 92px;
    margin-top: 64px;
    border-bottom: 2px solid #9a9a9a;
}

.filters h2 {
    grid-column: 2 / 16;
    background: #242a35;
    color: #fff;
    font: 24px/42px "Liberation Sans", sans-serif;
    text-align: center;
    height: 42px;
}

.filter {
    position: relative;
    display: grid;
    grid-row: 2;
    margin: 0 0 0 -2px;
    border: 3px solid #000;
    border-top-width: 4px;
    background: #fff;
    font: 26px/30px "Liberation Serif", serif;
    color: #232a3a;
}

.filter label {
    align-self: center;
    padding: 5px 4px 0 0;
    text-align: right;
    white-space: nowrap;
}

.filter input,
.filter output {
    min-width: 0;
    border-left: 1px dashed #000;
}

.filter input {
    background: #d4e0f0;
}

.f-inicio {
    grid-column: 2 / 5;
    grid-template-columns: 254fr 182fr 182fr;
}

.f-fin {
    grid-column: 6 / 9;
    grid-template-columns: 254fr 182fr 182fr;
}

.f-codigo {
    grid-column: 10 / 13;
    grid-template-columns: 280fr 114fr 378fr;
}

.f-codigo::after {
    content: '';
    position: absolute;
    right: 0;
    top: 0;
    width: 16px;
    height: 16px;
    background: #6c66d4;
    clip-path: polygon(0 0, 100% 0, 100% 100%, 50% 50%, 0 50%);
}

.f-reclutador {
    grid-column: 14 / 16;
    grid-template-columns: 198fr 378fr;
}

/* tablero */
.board {
    position: relative;
    display: grid;
    grid-template-columns: 60fr 266fr 18fr 743fr 26fr 266fr 26fr 667fr 41fr 674fr 11fr;
    align-items: start;
}

.kpis {
    display: grid;
    grid-template-rows: 161px 158px 166px 166px 132px;
    padding-top: 28px;
}

.kpis.candidatos {
    grid-column: 2;
}

.kpis.vacantes {
    grid-column: 6;
}

.kpi {
    display: grid;
    height: 132px;
    padding: 16px 0 13px 14px;
    border: 2px solid #242a35;
    border-radius: 22px;
    color: #242a35;
    font-family: "Liberation Sans", sans-serif;
}

.kpi h3 {
    grid-area: 1 / 1;
    font-size: 27px;
    line-height: 33px;
}

.kpi strong {
    grid-area: 1 / 1;
    align-self: end;
    padding-right: 17px;
    font-size: 50px;
    line-height: 50px;
    text-align: right;
}

.vacantes .kpi strong {
    padding-right: 43px;
}

.kpi.low {
    padding-bottom: 7px;
}

.kpi.small strong {
    font-size: 44px;
    line-height: 44px;
}

.kpi.medium strong {
    font-size: 48px;
}

.chart {
    border: 2px solid #1f2b50;
    border-radius: 62px;
    background: #fff;
    color: #595959;
    font: 18px/24px Lato, sans-serif;
}

.chart h2 {
    font: 31px/40px "Liberation Sans", sans-serif;
    text-align: center;
}

.funnel {
    grid-column: 4;
    height: 785px;
    margin-top: 33px;
    padding-top: 25px;
    border-radius: 124px;
}

.funnel h2 {
    color: #000;
}

.funnel dl {
    display: grid;
    grid-template-columns: 249fr 425fr;
    grid-auto-rows: 94px;
    column-gap: 15px;
    margin: 7px 52px 0 0;
}

.funnel dt {
    align-self: center;
    text-align: right;
}

.funnel dd {
    display: flex;
    align-items: center;
    justify-content: center;
    border-left: 2px solid #d9d9d9;
    margin-left: -1px;
}

.funnel dd span {
    background: #4f71be;
    color: #fff;
    font-weight: 700;
    line-height: 88px;
    text-align: center;
}

.charts {
    display: grid;
    gap: 29px;
    grid-auto-rows: 370px;
    padding-top: 38px;
}

.charts.left {
    grid-column: 8;
}

.charts.right {
    grid-column: 10;
}

.charts .chart {
    padding-top: 20px;
}

.charts .chart + .chart {
    margin-left: 6px;
    padding-top: 10px;
}

.chart-body {
    display: flex;
    justify-content: space-between;
}

.donut text {
    fill: #fff;
    font-weight: 700;
    text-anchor: middle;
}

.legend {
    display: grid;
}

.legend li {
    position: relative;
    padding-left: 14px;
}

.legend li::before {
    content: '';
    position: absolute;
    left: 0;
    top: 10px;
    width: 8px;
    height: 8px;
    background: #4f71be;
}

.legend .c2::before {
    background: #de8344;
}

.legend .c3::before {
    background: #a5a5a5;
}

.legend .c4::before {
    background: #f5c242;
}

.estado .chart-body {
    align-items: center;
    padding: 45px 41px 0 145px;
}

.estado .legend {
    gap: 13px;
    padding-bottom: 4px;
}

.origen h2 {
    padding-right: 10px;
}

.origen .chart-body {
    padding: 29px 34px 0 112px;
}

.origen .donut {
    margin-top: 15px;
}

.origen .legend,
.clientes .legend {
    grid-auto-rows: 48px;
    gap: 13px;
    width: 210px;
}

.meses h2 {
    padding-right: 6px;
    font-size: 26px;
}

.bars {
    width: 92%;
    margin: 1px 0 0 16px;
}

.bars text {
    fill: #595959;
}

.bars .values text {
    fill: #404040;
    text-anchor: middle;
}

.bars .axis text,
.bars .months text {
    text-anchor: end;
}

.clientes h2 {
    padding: 12px 4px 0 0;
    font: 26px/40px Lato, sans-serif;
}

.clientes .chart-body {
    padding: 27px 23px 0 112px;
}

.clientes .donut {
    margin-top: 11px;
}

.selection {
    position: absolute;
    left: 312px;
    top: 31px;
}

/* barras de desplazamiento */
.scroll-y {
    grid-column: 3;
    grid-row: 1 / 3;
    padding: 4px 4px 0 6px;
    border-left: 2px solid #e6e6e6;
    background: #fafafa;
}

.scroll-y span {
    display: block;
    height: 65%;
    border-radius: 9px;
    background: #b1b1b1;
}

.scroll-x {
    grid-column: 1 / 4;
    grid-row: 3;
    padding: 6px 4px;
    border-top: 2px solid #e6e6e6;
    background: #fafafa;
}

.scroll-x span {
    display: block;
    width: 82%;
    height: 18px;
    border-radius: 9px;
    background: #b1b1b1;
}

/* barra de estado */
.status {
    flex: none;
    display: flex;
    align-items: center;
    height: 46px;
    padding-left: 48px;
    border-top: 2px solid #a0a0a0;
    background: linear-gradient(#e3e3e3, #d8d8d8);
    color: #4d4d4d;
    font-size: 24px;
}

.ready {
    margin-right: 40px;
}

.access {
    display: flex;
    align-items: center;
    gap: 5px;
    margin-left: 32px;
}

.status-end {
    display: flex;
    align-items: center;
    height: 100%;
    margin-left: auto;
    padding-right: 50px;
}

.view {
    display: flex;
    align-items: center;
    justify-content: center;
    width: 68px;
    height: 100%;
}

.view.on {
    width: 76px;
    background: #a0a0a0;
}

.minus {
    margin-left: 20px;
}

.status input {
    appearance: none;
    width: 200px;
    height: 8px;
    margin: 0 13px;
    border-radius: 4px;
    background: #9c9c9c;
}

.status input::-webkit-slider-thumb {
    appearance: none;
    width: 33px;
    height: 33px;
    border: 1px solid #bbb;
    border-radius: 17px;
    background: #fff;
}

.percent {
    margin-left: 34px;
}
```
